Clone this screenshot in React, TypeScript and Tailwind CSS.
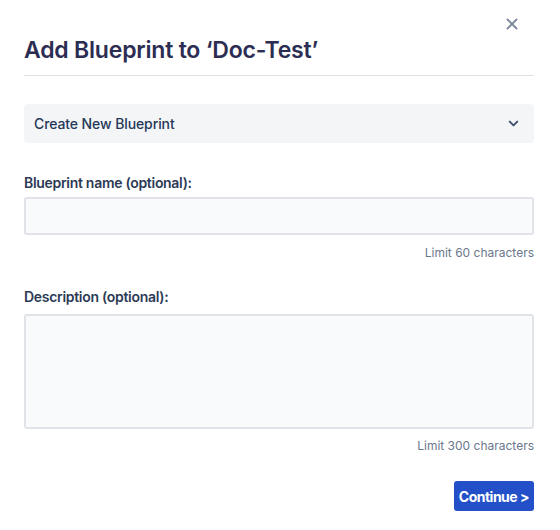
import { X, ChevronDown } from "lucide-react";

// Modal body for adding a blueprint to a document
export default function App() {
  return (
    <div className="relative h-[530px] w-[560px] bg-white pl-6 pr-[26px] font-['Inter','Liberation_Sans',sans-serif] text-[#2b2d52]">
      {/* Close */}
      <button
        className="absolute right-[39px] top-[15px] flex h-[18px] w-[18px] items-center justify-center text-[#7f8699]"
        aria-label="Close"
      >
        <X className="h-[18px] w-[18px]" strokeWidth={2.4} />
      </button>

      {/* Header */}
      <div className="border-b border-[#dfe1e6] pb-[9px] pt-[34px]">
        <h2 className="text-[23px] font-semibold leading-8 tracking-[-0.2px]">
          Add Blueprint to ‘Doc-Test’
        </h2>
      </div>

      {/* Blueprint select */}
      <button className="mt-[28px] flex h-[39px] w-full items-center justify-between rounded-[4px] bg-[#f4f5f7] pl-[10px] pr-[13px] text-left">
        <span className="text-[14px] font-medium tracking-[-0.1px] text-[#253858]">Create New Blueprint</span>
        <ChevronDown className="h-[15px] w-[15px] text-[#42526e]" strokeWidth={3.2} />
      </button>

      {/* Name */}
      <label className="mt-[30px] block text-[14px] font-semibold leading-5 tracking-[-0.3px] text-[#2c3a55]">
        Blueprint name (optional):
      </label>
      <input
        type="text"
        className="mt-[4px] block h-[38px] w-full rounded-[3px] border-2 border-[#e1e3e8] bg-[#f9fafb] px-2 text-sm outline-none"
      />
      <p className="mt-[10px] text-right text-[12px] leading-4 text-[#6b778c]">Limit 60 characters</p>

      {/* Description */}
      <label className="mt-[26px] block text-[14px] font-semibold leading-5 tracking-[-0.3px] text-[#2c3a55]">
        Description (optional):
      </label>
      <textarea className="mt-[7px] block h-[115px] w-full resize-none rounded-[3px] border-2 border-[#e1e3e8] bg-[#f9fafb] px-2 text-sm outline-none" />
      <p className="mt-[9px] text-right text-[12px] leading-4 text-[#6b778c]">Limit 300 characters</p>

      {/* Footer */}
      <div className="mt-[27px] flex justify-end">
        <button className="h-[30px] rounded-[3px] bg-[#2350c8] px-[5px] text-[14px] font-bold tracking-[-0.5px] text-white">
          Continue &gt;
        </button>
      </div>
    </div>
  );
}
